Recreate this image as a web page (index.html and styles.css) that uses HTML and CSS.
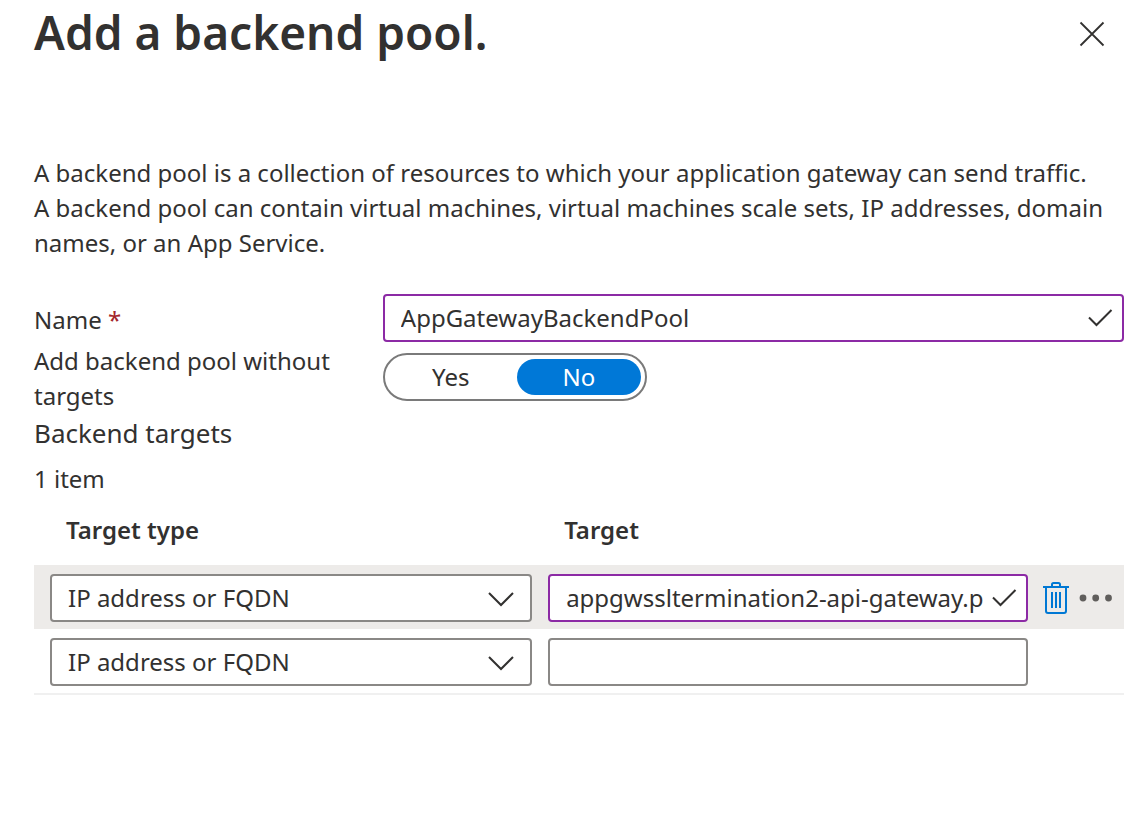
FILE: index.html
```html
<!DOCTYPE html>
<html lang="en">
<head>
<meta charset="utf-8">
<meta name="viewport" content="width=device-width, initial-scale=1">
<title>Add a backend pool</title>
<link rel="stylesheet" href="styles.css">
</head>
<body>
<main class="panel">
  <header class="panel-header">
    <h1 class="title">Add a backend pool.</h1>
    <button class="icon-button close" type="button" aria-label="Close">
      <svg width="26" height="26" viewBox="0 0 26 26" fill="none" stroke="#323130" stroke-width="1.800"><path d="M1.500 1.500l23 23M24.500 1.500l-23 23"/></svg>
    </button>
  </header>
  <p class="intro">A backend pool is a collection of resources to which your application gateway can send traffic.<br>A backend pool can contain virtual machines, virtual machines scale sets, IP addresses, domain names, or an App Service.</p>
  <form class="form">
    <div class="field name-field">
      <label class="field-label" for="pool-name">Name <span class="required">*</span></label>
      <div class="control">
        <input class="box valid" id="pool-name" type="text" value="AppGatewayBackendPool" required>
        <svg class="mark check" width="25" height="18" viewBox="0 0 25 18" fill="none" stroke="#323130" stroke-width="2"><path d="M1 8.500l7.500 7.500L23.500 1"/></svg>
      </div>
    </div>
    <div class="field toggle-field" role="radiogroup" aria-labelledby="toggle-label">
      <span class="field-label" id="toggle-label">Add backend pool without targets</span>
      <div class="toggle">
        <label class="option"><input class="option-input" type="radio" name="without-targets"><span class="option-text">Yes</span></label>
        <label class="option"><input class="option-input" type="radio" name="without-targets" checked><span class="option-text">No</span></label>
      </div>
    </div>
    <h2 class="subtitle">Backend targets</h2>
    <p class="count">1 item</p>
    <table class="targets">
      <thead>
        <tr><th class="head type-head" scope="col">Target type</th><th class="head" scope="col">Target</th><td class="head actions-head"></td></tr>
      </thead>
      <tbody>
        <tr class="row selected">
          <td class="cell">
            <div class="control">
              <select class="box" aria-label="Target type, item 1"><option>IP address or FQDN</option></select>
              <svg class="mark chevron" width="26" height="15" viewBox="0 0 26 15" fill="none" stroke="#323130" stroke-width="2"><path d="M1 1l12 12L25 1"/></svg>
            </div>
          </td>
          <td class="cell">
            <div class="control">
              <input class="box valid" type="text" aria-label="Target, item 1" value="appgwssltermination2-api-gateway.p">
              <svg class="mark check" width="25" height="18" viewBox="0 0 25 18" fill="none" stroke="#323130" stroke-width="2"><path d="M1 8.500l7.500 7.500L23.500 1"/></svg>
            </div>
          </td>
          <td class="cell actions-cell">
            <div class="actions">
              <button class="icon-button" type="button" aria-label="Delete">
                <svg width="26" height="32" viewBox="0 0 26 32" fill="none" stroke="#0078d4" stroke-width="2"><path d="M0 5h26M9 5V2.500Q9 1 10.500 1h5Q17 1 17 2.500V5M3 5v24q0 2 2 2h16q2 0 2-2V5M9 10v16M13 10v16M17 10v16"/></svg>
              </button>
              <button class="icon-button" type="button" aria-label="More actions">
                <svg width="34" height="8" viewBox="0 0 34 8" fill="#605e5c"><circle cx="4" cy="4" r="3.400"/><circle cx="16.700" cy="4" r="3.400"/><circle cx="29.500" cy="4" r="3.400"/></svg>
              </button>
            </div>
          </td>
        </tr>
        <tr class="row">
          <td class="cell">
            <div class="control">
              <select class="box" aria-label="Target type, new item"><option>IP address or FQDN</option></select>
              <svg class="mark chevron" width="26" height="15" viewBox="0 0 26 15" fill="none" stroke="#323130" stroke-width="2"><path d="M1 1l12 12L25 1"/></svg>
            </div>
          </td>
          <td class="cell">
            <div class="control"><input class="box" type="text" aria-label="Target, new item"></div>
          </td>
          <td class="cell"></td>
        </tr>
      </tbody>
    </table>
  </form>
</main>
</body>
</html>
```
FILE: styles.css
```css
* {
  box-sizing: border-box;
}

body {
  margin: 0;
  background: #fff;
  color: #323130;
  font: 24px/35px "Segoe UI", "Noto Sans", sans-serif;
}

.panel {
  padding: 0 23px 0 34px;
}

.panel-header {
  display: flex;
  justify-content: space-between;
  align-items: center;
  height: 68px;
  padding-right: 19px;
}

.title {
  margin: 0;
  padding-bottom: 4px;
  font-size: 46px;
  line-height: 64px;
  font-weight: 600;
}

.icon-button {
  display: flex;
  padding: 0;
  border: 0;
  background: none;
}

.intro {
  margin: 87px 0 34px;
}

.field {
  display: grid;
  grid-template-columns: 32% 1fr;
}

.name-field .field-label {
  padding-top: 8px;
}

.toggle-field .field-label {
  padding: 1px 0;
}

.toggle-field .toggle {
  margin-top: 11px;
}

.required {
  color: #a4262c;
}

.control {
  position: relative;
}

.box {
  display: block;
  width: 100%;
  height: 48px;
  padding: 0 35px 2px 16px;
  border: 2px solid #8a8886;
  border-radius: 4px;
  background: #fff;
  color: inherit;
  font: inherit;
  appearance: none;
}

.valid {
  border-color: #8c2aa5;
}

.mark {
  position: absolute;
  top: 15px;
  right: 11px;
  pointer-events: none;
}

.chevron {
  top: 18px;
  right: 18px;
}

.toggle {
  display: flex;
  gap: 4px;
  width: 264px;
  height: 48px;
  padding: 4px;
  border: 2px solid #7a7a7a;
  border-radius: 24px;
}

.option {
  position: relative;
  flex: 1;
}

.option-input {
  position: absolute;
  opacity: 0;
}

.option-text {
  display: block;
  border-radius: 18px;
  line-height: 36px;
  text-align: center;
}

.option-input:checked + .option-text {
  background: #0078d7;
  color: #fff;
}

.subtitle {
  margin: 0;
  font-size: 26px;
  line-height: 38px;
  font-weight: 400;
}

.count {
  margin: 9px 0 16px;
}

.targets {
  width: 100%;
  table-layout: fixed;
  border-collapse: collapse;
}

.head {
  height: 53px;
  padding: 0 0 18px 32px;
  font-weight: 600;
  text-align: left;
}

.type-head {
  width: 45.7%;
}

.actions-head {
  width: 96px;
}

.row {
  height: 64px;
}

.row:last-child {
  border-bottom: 2px solid #f0f0f0;
}

.selected {
  background: #edebe9;
}

.cell {
  padding: 9px 0 7px 16px;
}

.actions-cell {
  padding-left: 15px;
}

.actions {
  display: flex;
  align-items: center;
  gap: 10px;
}
```
